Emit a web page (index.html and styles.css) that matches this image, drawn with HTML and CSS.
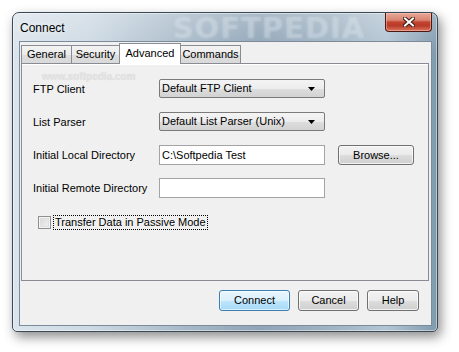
FILE: index.html
```html
<!DOCTYPE html>
<html>
<head>
<meta charset="utf-8">
<title>Connect</title>
<link rel="stylesheet" href="styles.css">
</head>
<body>
<div class="window">
  <div class="titlebar">
    <span class="title">Connect</span>
    <span class="glass-mark">SOFTPEDIA</span>
    <button class="close" aria-label="Close">
      <svg width="12" height="10" viewBox="0 0 12 10">
        <path d="M2 1.5 L10 8.5 M10 1.5 L2 8.5" stroke="#3a1a12" stroke-width="4" stroke-linecap="square" fill="none"/>
        <path d="M2 1.5 L10 8.5 M10 1.5 L2 8.5" stroke="#ffffff" stroke-width="2" stroke-linecap="square" fill="none"/>
      </svg>
    </button>
  </div>
  <div class="client">
    <div class="tabs">
      <div class="tab tab-general">General</div>
      <div class="tab tab-security">Security</div>
      <div class="tab tab-advanced active">Advanced</div>
      <div class="tab tab-commands">Commands</div>
    </div>
    <div class="panel">
      <span class="watermark">www.softpedia.com</span>
      <div class="form">
        <label class="lbl">FTP Client</label>
        <div class="combo"><span>Default FTP Client</span><svg class="arrow" width="7" height="4" viewBox="0 0 7 4"><polygon points="0,0 7,0 3.5,4" fill="#000"/></svg></div>
        <div></div>

        <label class="lbl">List Parser</label>
        <div class="combo"><span>Default List Parser (Unix)</span><svg class="arrow" width="7" height="4" viewBox="0 0 7 4"><polygon points="0,0 7,0 3.5,4" fill="#000"/></svg></div>
        <div></div>

        <label class="lbl">Initial Local Directory</label>
        <div class="field">C:\Softpedia Test</div>
        <button class="btn browse">Browse...</button>

        <label class="lbl">Initial Remote Directory</label>
        <div class="field"></div>
        <div></div>
      </div>
      <div class="check-row">
        <span class="checkbox"></span>
        <span class="check-label">Transfer Data in Passive Mode</span>
      </div>
    </div>
    <div class="buttons">
      <button class="btn default w-connect">Connect</button>
      <button class="btn w-cancel">Cancel</button>
      <button class="btn w-help">Help</button>
    </div>
  </div>
</div>
</body>
</html>
```
FILE: styles.css
```css
html, body {
  margin: 0;
  padding: 0;
  background: #ffffff;
}
body {
  width: 459px;
  height: 352px;
  overflow: hidden;
  font-family: "Liberation Sans", Arial, sans-serif;
  font-size: 11px;
  color: #000;
}
.window {
  box-sizing: border-box;
  margin: 12px 0 0 12px;
  width: 426px;
  height: 320px;
  border: 1px solid #3b4a57;
  border-radius: 7px 7px 5px 5px;
  padding: 0 5px 5px 6px;
  display: flex;
  flex-direction: column;
  background:
    linear-gradient(to bottom, rgba(255,255,255,0.25), rgba(255,255,255,0) 40px),
    linear-gradient(to right, #dbe4ec 0%, #cdd9e3 18%, #a8bac9 40%, #8fa4b6 58%, #9fb3c3 75%, #b3c5d3 88%, #7f9aae 100%);
  box-shadow: 3px 5px 12px rgba(0,0,0,0.45), inset 0 0 0 1px rgba(255,255,255,0.45);
}
.titlebar {
  height: 28px;
  display: flex;
  align-items: flex-start;
  flex: none;
}
.title {
  margin: 8px 0 0 1px;
  font-size: 12px;
  line-height: 14px;
  color: #000;
  text-shadow: 0 0 6px rgba(255,255,255,0.9);
}
.glass-mark {
  margin: 1px 0 0 108px;
  font-size: 29px;
  line-height: 28px;
  font-weight: bold;
  letter-spacing: 1px;
  color: rgba(225,234,242,0.18);
  text-shadow: 0 0 3px rgba(225,234,242,0.3);
  font-family: "DejaVu Sans", sans-serif;
}
.close {
  margin-left: auto;
  width: 47px;
  height: 19px;
  padding: 0;
  border: 1px solid #4a1a12;
  border-top: none;
  border-radius: 0 0 4px 4px;
  background: linear-gradient(to bottom, #e9a998 0%, #d88470 40%, #c24430 50%, #b83a28 70%, #d9765e 100%);
  box-shadow: inset 0 0 0 1px rgba(255,200,190,0.5);
  display: flex;
  align-items: center;
  justify-content: center;
}
.client {
  box-sizing: border-box;
  flex: 1;
  border: 1px solid #7b8b99;
  background: #f0f0f0;
  padding: 1px 2px 0 1px;
  display: flex;
  flex-direction: column;
}
.tabs {
  display: flex;
  height: 20px;
  flex: none;
}
.tab {
  box-sizing: border-box;
  height: 18px;
  margin-top: 2px;
  border: 1px solid #898c95;
  border-bottom: none;
  background: linear-gradient(to bottom, #f3f3f3 0%, #ebebeb 50%, #dedede 51%, #d9d9d9 100%);
  text-align: center;
  line-height: 17px;
  position: relative;
}
.tab + .tab { margin-left: -1px; }
.tab-general { width: 51px; }
.tab-security { width: 49px; }
.tab-advanced { width: 62px; }
.tab-commands { width: 61px; }
.tab.active {
  height: 21px;
  margin-top: 0;
  background: #ffffff;
  line-height: 19px;
  z-index: 2;
}
.panel {
  box-sizing: border-box;
  position: relative;
  height: 218px;
  flex: none;
  border: 1px solid #898c95;
  background: #f0f0f0;
  padding: 15px 0 0 11px;
  box-shadow: inset 0 1px 0 #ffffff;
}
.watermark {
  position: absolute;
  left: 20px;
  top: 7px;
  font-size: 10px;
  color: #e2e2e2;
  font-weight: bold;
  text-shadow: 0 0 1px #dadada;
}
.form {
  display: grid;
  grid-template-columns: 113px 166px 76px;
  grid-template-rows: 20px 20px 20px 20px;
  column-gap: 13px;
  row-gap: 13px;
  align-items: start;
}
.lbl {
  line-height: 20px;
  white-space: nowrap;
}
.combo {
  box-sizing: border-box;
  height: 19px;
  border: 1px solid #7a7a7a;
  border-radius: 2px;
  background: linear-gradient(to bottom, #f4f4f4 0%, #ececec 50%, #dedede 51%, #d2d2d2 100%);
  display: flex;
  align-items: center;
  padding: 0 9px 0 2px;
  line-height: 17px;
  white-space: nowrap;
}
.combo span { flex: 1; }
.arrow { flex: none; }
.field {
  box-sizing: border-box;
  height: 20px;
  border: 1px solid #a3a3a3;
  background: #ffffff;
  padding: 0 2px;
  line-height: 18px;
  white-space: nowrap;
}
.btn {
  box-sizing: border-box;
  height: 21px;
  padding: 0;
  border: 1px solid #707070;
  border-radius: 3px;
  background: linear-gradient(to bottom, #f2f2f2 0%, #ebebeb 50%, #dddddd 51%, #cfcfcf 100%);
  box-shadow: inset 0 0 0 1px rgba(255,255,255,0.7);
  font-family: "Liberation Sans", Arial, sans-serif;
  font-size: 11px;
  color: #000;
  line-height: 19px;
}
.browse {
  width: 76px;
  height: 20px;
}
.check-row {
  display: flex;
  align-items: center;
  margin: 17px 0 0 5px;
  height: 14px;
}
.checkbox {
  box-sizing: border-box;
  width: 13px;
  height: 13px;
  border: 1px solid #8e8f8f;
  background: linear-gradient(135deg, #d6d6d6 0%, #f4f4f4 100%);
  box-shadow: inset 0 0 0 1px #f4f4f4, inset 0 0 0 2px #dedede;
  flex: none;
}
.check-label {
  margin-left: 3px;
  outline: 1px dotted #000;
  outline-offset: 0;
  padding: 0 1px;
  line-height: 13px;
}
.buttons {
  display: flex;
  justify-content: flex-end;
  gap: 8px;
  margin-top: 9px;
  padding-right: 10px;
}
.w-connect { width: 71px; }
.w-cancel { width: 61px; }
.w-help { width: 52px; }
.btn.default {
  border-color: #3c7fb1;
  background: linear-gradient(to bottom, #eaf6fd 0%, #d9f0fc 50%, #bee6fd 51%, #a7d9f5 100%);
  box-shadow: inset 0 0 0 1px rgba(255,255,255,0.6);
}
```
